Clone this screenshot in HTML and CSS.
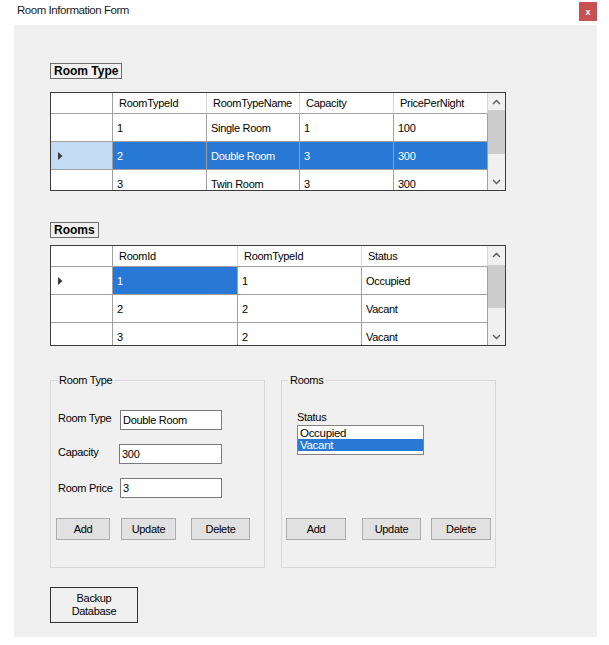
FILE: index.html
```html
<!DOCTYPE html>
<html>
<head>
<meta charset="utf-8">
<title>Room Information Form</title>
<link rel="stylesheet" href="styles.css">
</head>
<body>
<div class="titlebar">
  <span class="title">Room Information Form</span>
  <span class="close">x</span>
</div>
<div class="panel">
  <div class="caption">Room Type</div>
  <div class="dgv dgv-types">
    <div class="dgv-body">
      <div class="dgv-row dgv-head"><div class="rh"></div><div>RoomTypeId</div><div>RoomTypeName</div><div>Capacity</div><div>PricePerNight</div></div>
      <div class="dgv-row"><div class="rh"></div><div>1</div><div>Single Room</div><div>1</div><div>100</div></div>
      <div class="dgv-row row-sel"><div class="rh rh-sel"><svg class="arrow" width="5" height="8" viewBox="0 0 5 8"><polygon points="0,0 4.5,4 0,8" fill="#3a3a3a"/></svg></div><div>2</div><div>Double Room</div><div>3</div><div>300</div></div>
      <div class="dgv-row"><div class="rh"></div><div>3</div><div>Twin Room</div><div>3</div><div>300</div></div>
    </div>
    <div class="vscroll">
      <div class="sb-btn"><svg width="9" height="6" viewBox="0 0 9 6"><path d="M1 5 L4.5 1.5 L8 5" fill="none" stroke="#606060" stroke-width="1.5"/></svg></div>
      <div class="sb-thumb thumb-types"></div>
      <div class="sb-track"></div>
      <div class="sb-btn"><svg width="9" height="6" viewBox="0 0 9 6"><path d="M1 1 L4.5 4.5 L8 1" fill="none" stroke="#606060" stroke-width="1.5"/></svg></div>
    </div>
  </div>

  <div class="caption caption-rooms">Rooms</div>
  <div class="dgv dgv-rooms">
    <div class="dgv-body">
      <div class="dgv-row dgv-head"><div class="rh"></div><div>RoomId</div><div>RoomTypeId</div><div>Status</div></div>
      <div class="dgv-row"><div class="rh"><svg class="arrow" width="5" height="8" viewBox="0 0 5 8"><polygon points="0,0 4.5,4 0,8" fill="#3a3a3a"/></svg></div><div class="cell-sel">1</div><div>1</div><div>Occupied</div></div>
      <div class="dgv-row"><div class="rh"></div><div>2</div><div>2</div><div>Vacant</div></div>
      <div class="dgv-row"><div class="rh"></div><div>3</div><div>2</div><div>Vacant</div></div>
    </div>
    <div class="vscroll">
      <div class="sb-btn"><svg width="9" height="6" viewBox="0 0 9 6"><path d="M1 5 L4.5 1.5 L8 5" fill="none" stroke="#606060" stroke-width="1.5"/></svg></div>
      <div class="sb-thumb thumb-rooms"></div>
      <div class="sb-track"></div>
      <div class="sb-btn"><svg width="9" height="6" viewBox="0 0 9 6"><path d="M1 1 L4.5 4.5 L8 1" fill="none" stroke="#606060" stroke-width="1.5"/></svg></div>
    </div>
  </div>

  <div class="groups">
    <div class="group">
      <div class="group-title">Room Type</div>
      <div class="form">
        <label class="flabel flabel-up">Room Type</label><div class="textbox">Double Room</div>
        <label class="flabel flabel-up">Capacity</label><div class="textbox textbox-shift">300</div>
        <label class="flabel">Room Price</label><div class="textbox">3</div>
      </div>
      <div class="btns btns-left">
        <button class="btn w54">Add</button>
        <button class="btn w55 gap11">Update</button>
        <button class="btn w59 gap15">Delete</button>
      </div>
    </div>
    <div class="group">
      <div class="group-title">Rooms</div>
      <div class="status-label">Status</div>
      <div class="listbox">
        <div class="item">Occupied</div>
        <div class="item item-sel">Vacant</div>
      </div>
      <div class="btns btns-right">
        <button class="btn w60">Add</button>
        <button class="btn w59 gap16">Update</button>
        <button class="btn w60 gap10">Delete</button>
      </div>
    </div>
  </div>

  <button class="backup">Backup<br>Database</button>
</div>
</body>
</html>
```

FILE: styles.css
```css
html, body {
  margin: 0;
  padding: 0;
  background: #ffffff;
}
body {
  font-family: "Liberation Sans", Arial, sans-serif;
  font-size: 11px;
  letter-spacing: -0.3px;
  color: #000;
  width: 609px;
  height: 645px;
  overflow: hidden;
}
.titlebar {
  height: 25px;
  display: flex;
  align-items: flex-start;
}
.title {
  margin: 3px 0 0 17px;
  font-size: 11.5px;
  line-height: 14px;
  letter-spacing: -0.45px;
  color: #1a1a1a;
}
.close {
  margin: 2px 12px 0 auto;
  width: 18px;
  height: 19px;
  background: #c75050;
  color: #fff;
  font-weight: bold;
  font-size: 9px;
  letter-spacing: 0;
  display: flex;
  align-items: center;
  justify-content: center;
}
.panel {
  margin-left: 14px;
  width: 583px;
  height: 612px;
  box-sizing: border-box;
  background: #f0f0f0;
  padding: 38px 0 0 36px;
}
.caption {
  display: table;
  height: 16px;
  box-sizing: border-box;
  border: 1px solid #6e6e6e;
  padding: 0 3px;
  font-weight: bold;
  font-size: 12px;
  line-height: 14px;
  letter-spacing: 0;
}
.caption-rooms {
  margin-top: 31px;
}
.dgv {
  display: flex;
  width: 456px;
  box-sizing: border-box;
  border: 1px solid #3c3c3c;
  background: #fff;
  margin-top: 13px;
}
.dgv-rooms {
  margin-top: 7px;
  height: 101px;
}
.dgv-types {
  height: 99px;
}
.dgv-body {
  flex: 1;
  overflow: hidden;
}
.dgv-row {
  display: grid;
  height: 28px;
}
.dgv-types .dgv-row {
  grid-template-columns: 62px 94px 93px 94px 94px;
}
.dgv-rooms .dgv-row {
  grid-template-columns: 62px 125px 124px 126px;
}
.dgv-row > div {
  box-sizing: border-box;
  border-right: 1px solid #a0a0a0;
  border-bottom: 1px solid #a0a0a0;
  padding-left: 4px;
  display: flex;
  align-items: center;
  white-space: nowrap;
  overflow: hidden;
}
.dgv-head {
  height: 21px;
}
.dgv-head > div {
  padding-left: 6px;
  border-right-color: #d6d6d6;
}
.dgv-head > div.rh {
  border-right-color: #a0a0a0;
}
.rh {
  padding-left: 7px !important;
}
.rh-sel {
  background: #c4dcf3;
}
.row-sel > div:not(.rh),
.cell-sel {
  background: #2878d6;
  color: #fff;
}
.vscroll {
  width: 17px;
  flex: 0 0 17px;
  background: #f0f0f0;
  display: flex;
  flex-direction: column;
}
.sb-btn {
  height: 17px;
  flex: 0 0 17px;
  display: flex;
  align-items: center;
  justify-content: center;
}
.sb-thumb {
  background: #cdcdcd;
}
.thumb-types {
  height: 44px;
}
.thumb-rooms {
  margin-top: 2px;
  height: 43px;
}
.sb-track {
  flex: 1;
}
.groups {
  display: flex;
  gap: 16px;
  margin-top: 34px;
}
.group {
  width: 215px;
  height: 188px;
  box-sizing: border-box;
  border: 1px solid #d8d8d8;
}
.group-title {
  display: table;
  margin: -7px 0 0 6px;
  padding: 0 2px;
  height: 13px;
  line-height: 13px;
  background: #f0f0f0;
}
.form {
  display: grid;
  grid-template-columns: 62px 102px;
  grid-auto-rows: 20px;
  row-gap: 14px;
  margin: 23px 0 0 7px;
  align-items: center;
}
.flabel {
  line-height: 13px;
}
.flabel-up {
  margin-top: -3px;
}
.textbox {
  height: 20px;
  box-sizing: border-box;
  border: 1px solid #7a7a7a;
  background: #fff;
  padding-left: 2px;
  line-height: 18px;
}
.textbox-shift {
  margin-left: -1px;
}
.btns {
  display: flex;
}
.btns-left {
  margin: 20px 0 0 5px;
}
.btns-right {
  margin: 63px 0 0 4px;
}
.btn {
  height: 22px;
  box-sizing: border-box;
  border: 1px solid #adadad;
  background: #e1e1e1;
  font-family: "Liberation Sans", Arial, sans-serif;
  font-size: 11px;
  letter-spacing: -0.3px;
  color: #000;
  padding: 0;
  margin: 0;
}
.w54 { width: 54px; }
.w55 { width: 55px; }
.w59 { width: 59px; }
.w60 { width: 60px; }
.gap10 { margin-left: 10px; }
.gap11 { margin-left: 11px; }
.gap15 { margin-left: 15px; }
.gap16 { margin-left: 16px; }
.status-label {
  margin: 24px 0 0 15px;
  line-height: 13px;
}
.listbox {
  margin: 1px 0 0 15px;
  width: 127px;
  height: 30px;
  box-sizing: border-box;
  border: 1px solid #828282;
  background: #fff;
  padding-top: 1px;
}
.item {
  height: 12px;
  line-height: 12px;
  padding-left: 2px;
  font-size: 11.5px;
}
.item-sel {
  background: #2878d6;
  color: #fff;
}
.backup {
  display: block;
  margin-top: 19px;
  width: 88px;
  height: 36px;
  box-sizing: border-box;
  border: 1px solid #333;
  background: #f0f0f0;
  font-family: "Liberation Sans", Arial, sans-serif;
  font-size: 11px;
  letter-spacing: -0.3px;
  line-height: 13px;
  color: #000;
  padding: 0;
}
```
